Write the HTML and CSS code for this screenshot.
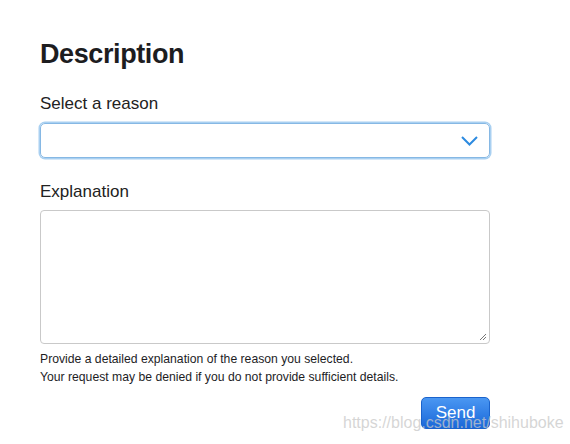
FILE: index.html
```html
<!DOCTYPE html>
<html>
<head>
<meta charset="utf-8">
<link rel="stylesheet" href="styles.css">
</head>
<body>
<main class="form">
  <h1 class="title">Description</h1>
  <label class="label">Select a reason</label>
  <div class="select">
    <svg class="chevron" width="17" height="10" viewBox="0 0 17 10"><path d="M1 1 L8.5 8.5 L16 1" fill="none" stroke="#2d8be0" stroke-width="2"/></svg>
  </div>
  <label class="label label-expl">Explanation</label>
  <div class="textarea">
    <svg class="grip" width="8" height="8" viewBox="0 0 8 8"><path d="M1 7 L7 1 M4 7 L7 4" stroke="#777" stroke-width="1"/></svg>
  </div>
  <p class="help">Provide a detailed explanation of the reason you selected.<br>Your request may be denied if you do not provide sufficient details.</p>
  <div class="actions"><button class="send">Send</button></div>
</main>
<div class="watermark">https://blog.csdn.net/shihuboke</div>
</body>
</html>
```
FILE: styles.css
```css
html, body { margin: 0; padding: 0; background: #fff; }
body { font-family: "Liberation Sans", Arial, sans-serif; color: #222; width: 570px; height: 444px; overflow: hidden; position: relative; }
.form { padding: 39px 0 0 40px; width: 450px; display: flex; flex-direction: column; }
.title { margin: 0; font-size: 27px; font-weight: bold; line-height: 30px; letter-spacing: -0.4px; color: #1d1d1f; }
.label { font-size: 17px; line-height: 20px; display: block; }
.form > .label:first-of-type { margin-top: 25px; }
.select { margin-top: 9px; height: 33px; border: 1px solid #86b8e4; box-shadow: 0 0 0 1.5px #a9d0f1; border-radius: 5px; display: flex; align-items: center; justify-content: flex-end; padding-right: 11px; }
.label-expl { margin-top: 24px; }
.textarea { margin-top: 8px; height: 130px; border: 1px solid #c9c9c9; border-radius: 4px; display: flex; align-items: flex-end; justify-content: flex-end; padding: 0 2px 2px 0; box-sizing: content-box; }
.grip { display: block; }
.help { margin: 6px 0 0; font-size: 12.2px; line-height: 18px; color: #1d1d1f; }
.actions { display: flex; justify-content: flex-end; margin-top: 11px; }
.send { width: 69px; height: 32px; border: 1px solid #1a63cc; border-radius: 5px; background: linear-gradient(#4a97f2, #1a68d9); color: #fff; font-family: "Liberation Sans", Arial, sans-serif; font-size: 17px; padding: 0; }
.watermark { position: absolute; left: 343px; top: 414px; font-size: 16px; color: rgba(200,200,200,0.75); white-space: nowrap; }
```
